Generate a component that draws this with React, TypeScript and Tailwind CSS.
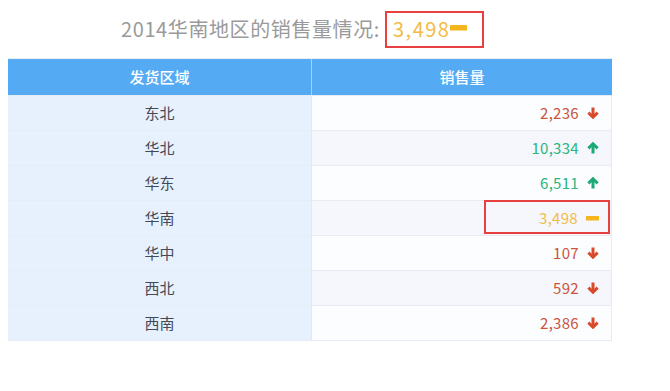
import React from "react";

type Trend = "up" | "down" | "flat";
const rows: { region: string; value: string; trend: Trend }[] = [
  { region: "东北", value: "2,236", trend: "down" },
  { region: "华北", value: "10,334", trend: "up" },
  { region: "华东", value: "6,511", trend: "up" },
  { region: "华南", value: "3,498", trend: "flat" },
  { region: "华中", value: "107", trend: "down" },
  { region: "西北", value: "592", trend: "down" },
  { region: "西南", value: "2,386", trend: "down" },
];

function TrendIcon({ trend }: { trend: Trend }) {
  if (trend === "flat") {
    return (
      <svg width="13" height="12" viewBox="0 0 13 12" className="block">
        <rect x="0" y="4" width="13" height="4.5" rx="0.5" fill="#f4b61c" />
      </svg>
    );
  }
  const color = trend === "down" ? "#d94a2c" : "#1ca975";
  return (
    <svg
      width="12"
      height="12"
      viewBox="0 0 12 12"
      className="block"
      style={{ transform: trend === "up" ? "rotate(180deg)" : undefined }}
    >
      <path d="M6 0.5 L6 10" stroke={color} strokeWidth="3" fill="none" />
      <path
        d="M1.4 5.6 L6 10.2 L10.6 5.6"
        stroke={color}
        strokeWidth="3"
        fill="none"
        strokeLinejoin="miter"
      />
    </svg>
  );
}

const font = { fontFamily: '"Noto Sans CJK SC", "Noto Sans", sans-serif' };

export default function App() {
  return (
    <div className="w-[670px] h-[391px] bg-white overflow-hidden" style={font}>
      <div className="flex items-center pl-[121px] pt-[10px] h-[48px]">
        <span className="text-[20px] text-[#9a9a9a] leading-none tracking-[0.6px]">
          2014华南地区的销售量情况:
        </span>
        <span className="ml-[5px] flex items-center h-[37px] border-2 border-[#e8403f] pl-[6px] pr-[15px]">
          <span className="text-[20px] text-[#f3bb47] leading-none tracking-[1.5px]">3,498</span>
          <svg width="17" height="8" viewBox="0 0 17 8" className="mb-[2px] block">
            <rect x="0" y="1" width="17" height="5.5" rx="0.5" fill="#f4b61c" />
          </svg>
        </span>
      </div>
      <div className="mt-[10px] ml-[8px] w-[604px] border-t border-[#e9eef5]">
        <div className="grid grid-cols-[303px_1px_300px] h-[36px] bg-[#55aaf4] text-white text-[15px] font-medium">
          <div className="flex items-center justify-center">发货区域</div>
          <div className="bg-[#a5d1f8]" />
          <div className="flex items-center justify-center">销售量</div>
        </div>
        {rows.map((r, i) => (
          <div
            key={r.region}
            className="grid grid-cols-[303px_1px_300px] h-[35px] text-[15px] border-t border-[#e6ecf4]"
          >
            <div className="flex items-center justify-center bg-[#e7f1fd] text-[#444a55]">
              {r.region}
            </div>
            <div className="bg-[#dfe9f6]" />
            <div
              className={`relative flex items-center justify-end pr-[12px] border-r border-[#e6ebf2] ${
                i % 2 === 1 ? "bg-[#f5f7fc]" : "bg-[#fcfdff]"
              }`}
            >
              <span
                className={`tracking-[0.3px] ${
                  r.trend === "down"
                    ? "text-[#c9553e]"
                    : r.trend === "up"
                    ? "text-[#2cb37e]"
                    : "text-[#f3bb47]"
                }`}
              >
                {r.value}
              </span>
              <span className="ml-[8px]">
                <TrendIcon trend={r.trend} />
              </span>
              {r.trend === "flat" && (
                <div className="absolute left-[172px] top-[-1px] right-[1px] bottom-[1px] border-2 border-[#e8403f]" />
              )}
            </div>
          </div>
        ))}
        <div className="h-[1px] bg-[#e6ecf4]" />
      </div>
    </div>
  );
}
